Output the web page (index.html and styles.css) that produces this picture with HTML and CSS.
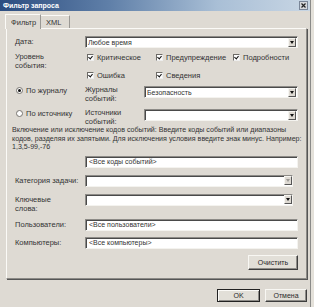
FILE: index.html
```html
<!DOCTYPE html>
<html lang="ru">
<head>
  <meta charset="UTF-8">
  <title>Фильтр запроса</title>
  <link rel="stylesheet" href="styles.css">
</head>
<body>
  <div class="window">
    <div class="titlebar">
      <span class="title">Фильтр запроса</span>
      <span class="close">
        <svg width="5" height="5" viewBox="0 0 5 5"><path d="M0.5 0.5L4.5 4.5M4.5 0.5L0.5 4.5" stroke="#222" stroke-width="1.2"/></svg>
      </span>
    </div>

    <div class="tabs">
      <span class="tab active">Фильтр</span>
      <span class="tab">XML</span>
    </div>

    <div class="panel">
      <div class="row">
        <span class="label">Дата:</span>
        <div class="select"><span>Любое время</span><span class="arrow"></span></div>
      </div>

      <div class="row level">
        <span class="label two">Уровень<br>события:</span>
        <div class="checks">
          <span class="check"><span class="box on"></span>Критическое</span>
          <span class="check"><span class="box on"></span>Предупреждение</span>
          <span class="check"><span class="box on"></span>Подробности</span>
          <span class="check"><span class="box on"></span>Ошибка</span>
          <span class="check"><span class="box on"></span>Сведения</span>
        </div>
      </div>

      <div class="row source first">
        <span class="radio-label"><span class="radio on"></span>По журналу</span>
        <span class="label two">Журналы<br>событий:</span>
        <div class="select"><span>Безопасность</span><span class="arrow"></span></div>
      </div>

      <div class="row source">
        <span class="radio-label"><span class="radio"></span>По источнику</span>
        <span class="label two">Источники<br>событий:</span>
        <div class="select"><span></span><span class="arrow"></span></div>
      </div>

      <p class="hint">Включение или исключение кодов событий: Введите коды событий или диапазоны кодов, разделяя их запятыми. Для исключения условия введите знак минус. Например: 1,3,5-99,-76</p>

      <div class="row codes">
        <span class="label"></span>
        <div class="input">&lt;Все коды событий&gt;</div>
      </div>

      <div class="row gap7 narrow">
        <span class="label">Категория задачи:</span>
        <div class="select"><span></span><span class="arrow off"></span></div>
      </div>

      <div class="row gap7 narrow">
        <span class="label two">Ключевые<br>слова:</span>
        <div class="select"><span></span><span class="arrow"></span></div>
      </div>

      <div class="row gap6">
        <span class="label">Пользователи:</span>
        <div class="input">&lt;Все пользователи&gt;</div>
      </div>

      <div class="row gap6">
        <span class="label">Компьютеры:</span>
        <div class="input">&lt;Все компьютеры&gt;</div>
      </div>

      <div class="clear-row">
        <button class="button clear">Очистить</button>
      </div>
    </div>

    <div class="footer">
      <button class="button ok">OK</button>
      <button class="button">Отмена</button>
    </div>
  </div>
</body>
</html>
```

FILE: styles.css
```css
body {
  margin: 0;
  font-family: 'Liberation Sans', Arial, sans-serif;
  font-size: 7.5px;
  color: #333;
  background: #e4e1da;
}

.window {
  width: 311px;
  height: 307px;
  box-sizing: border-box;
  border-right: 1px solid #8a8a88;
  background: #dedad3;
}

.titlebar {
  display: flex;
  justify-content: space-between;
  align-items: center;
  height: 11px;
  padding: 0 2px 0 3px;
  background: linear-gradient(to right, #2c4d80 0%, #5f7fa8 35%, #a9bfd6 70%, #c8d6e4 100%);
}
.title {
  color: white;
  font-weight: bold;
  font-size: 7px;
}
.close {
  display: flex;
  align-items: center;
  justify-content: center;
  width: 7px;
  height: 7px;
  background: #d6d8dc;
  border: 1px solid #7a8698;
}

.tabs {
  display: flex;
  padding-left: 5px;
  margin-top: 3px;
  height: 14px;
  align-items: flex-end;
}
.tab {
  display: flex;
  align-items: center;
  height: 12px;
  padding: 0 5px;
  border: 1px solid #9a9894;
  border-bottom: none;
  border-left-color: #fbfaf7;
  border-top-color: #fbfaf7;
}
.tab.active {
  height: 14px;
  width: 24px;
  margin-bottom: -1px;
  position: relative;
  background: #dedad3;
}
.tab + .tab {
  width: 18px;
  border-left: none;
}

.panel {
  margin-left: 6px;
  width: 301px;
  height: 251px;
  box-sizing: border-box;
  border: 1px solid #8c8a86;
  border-top-color: #fbfaf7;
  border-left-color: #fbfaf7;
  box-shadow: 1px 1px 0 #555;
  padding: 7px 8px 0 8px;
  display: flex;
  flex-direction: column;
}

.row {
  display: grid;
  grid-template-columns: 70px 1fr;
  align-items: start;
}
.label {
  line-height: 12px;
}
.label.two {
  line-height: 9px;
  padding-top: 1px;
}

.select, .input {
  display: flex;
  align-items: center;
  justify-content: space-between;
  height: 12px;
  box-sizing: border-box;
  background: white;
  border: 1px solid #8d8b87;
  border-right-color: #f4f3ef;
  border-bottom-color: #f4f3ef;
  box-shadow: inset 1px 1px 0 #4a4a4a;
  padding-left: 2px;
  font-size: 7px;
}
.input {
  padding-left: 3px;
}
.arrow {
  width: 8px;
  height: 9px;
  margin-right: 1px;
  background: #dedad3;
  border: 1px solid #f6f5f1;
  border-right-color: #555;
  border-bottom-color: #555;
  box-sizing: border-box;
  display: flex;
  align-items: center;
  justify-content: center;
}
.arrow::after {
  content: "";
  border-left: 2.5px solid transparent;
  border-right: 2.5px solid transparent;
  border-top: 3px solid #111;
}
.arrow.off::after {
  border-top-color: #9c9a96;
}

.level {
  margin-top: 4px;
}
.level .label.two {
  padding-top: 0;
}
.checks {
  display: grid;
  grid-template-columns: 69px 77px 1fr;
  row-gap: 8px;
  padding-left: 2px;
}
.check {
  display: flex;
  align-items: center;
  gap: 3px;
  height: 10px;
}
.box {
  width: 7px;
  height: 7px;
  box-sizing: border-box;
  background: white;
  border: 1px solid #6c6a66;
  border-right-color: #eee;
  border-bottom-color: #eee;
  position: relative;
}
.box.on::after {
  content: "";
  position: absolute;
  left: 1px;
  top: 0px;
  width: 2px;
  height: 3px;
  border: solid #111;
  border-width: 0 1.2px 1.2px 0;
  transform: rotate(40deg);
}

.source {
  grid-template-columns: 70px 59px 1fr;
  margin-top: 6px;
}
.source .label.two {
  padding-top: 0;
  margin-top: -1px;
}
.radio-label {
  display: flex;
  align-items: center;
  gap: 3px;
  height: 10px;
  padding-left: 1px;
  margin-top: -1px;
}
.radio {
  width: 7px;
  height: 7px;
  box-sizing: border-box;
  border-radius: 50%;
  background: white;
  border: 1px solid #77746f;
  display: flex;
  align-items: center;
  justify-content: center;
}
.radio.on::after {
  content: "";
  width: 3px;
  height: 3px;
  border-radius: 50%;
  background: #111;
}

.hint {
  margin: 0;
  margin-left: -3px;
  margin-right: -4px;
  line-height: 8.5px;
  font-size: 7.1px;
}

.codes {
  margin-top: 4px;
}
.gap7 {
  margin-top: 7px;
}
.gap6 {
  margin-top: 6px;
}
.narrow {
  padding-right: 5px;
}
.narrow .arrow {
  margin-right: 0;
}

.clear-row {
  display: flex;
  justify-content: flex-end;
  margin-top: 6px;
}
.button {
  font-family: 'Liberation Sans', Arial, sans-serif;
  font-size: 7px;
  color: #2a2a2a;
  background: #e2dfd8;
  border: 1px solid #f8f7f3;
  border-right-color: #3e3e3e;
  border-bottom-color: #3e3e3e;
  box-shadow: inset -1px -1px 0 #8e8c88;
  padding: 0;
  height: 14px;
}
.clear {
  width: 50px;
  height: 15px;
}

.footer {
  display: flex;
  justify-content: flex-end;
  gap: 5px;
  margin-top: 10px;
  padding-right: 3px;
}
.footer .button {
  width: 42px;
  height: 13px;
}
.footer .ok {
  width: 43px;
  border: 1px solid #222;
  box-shadow: inset 1px 1px 0 #fbfaf7, inset -1px -1px 0 #8e8c88;
}
```
